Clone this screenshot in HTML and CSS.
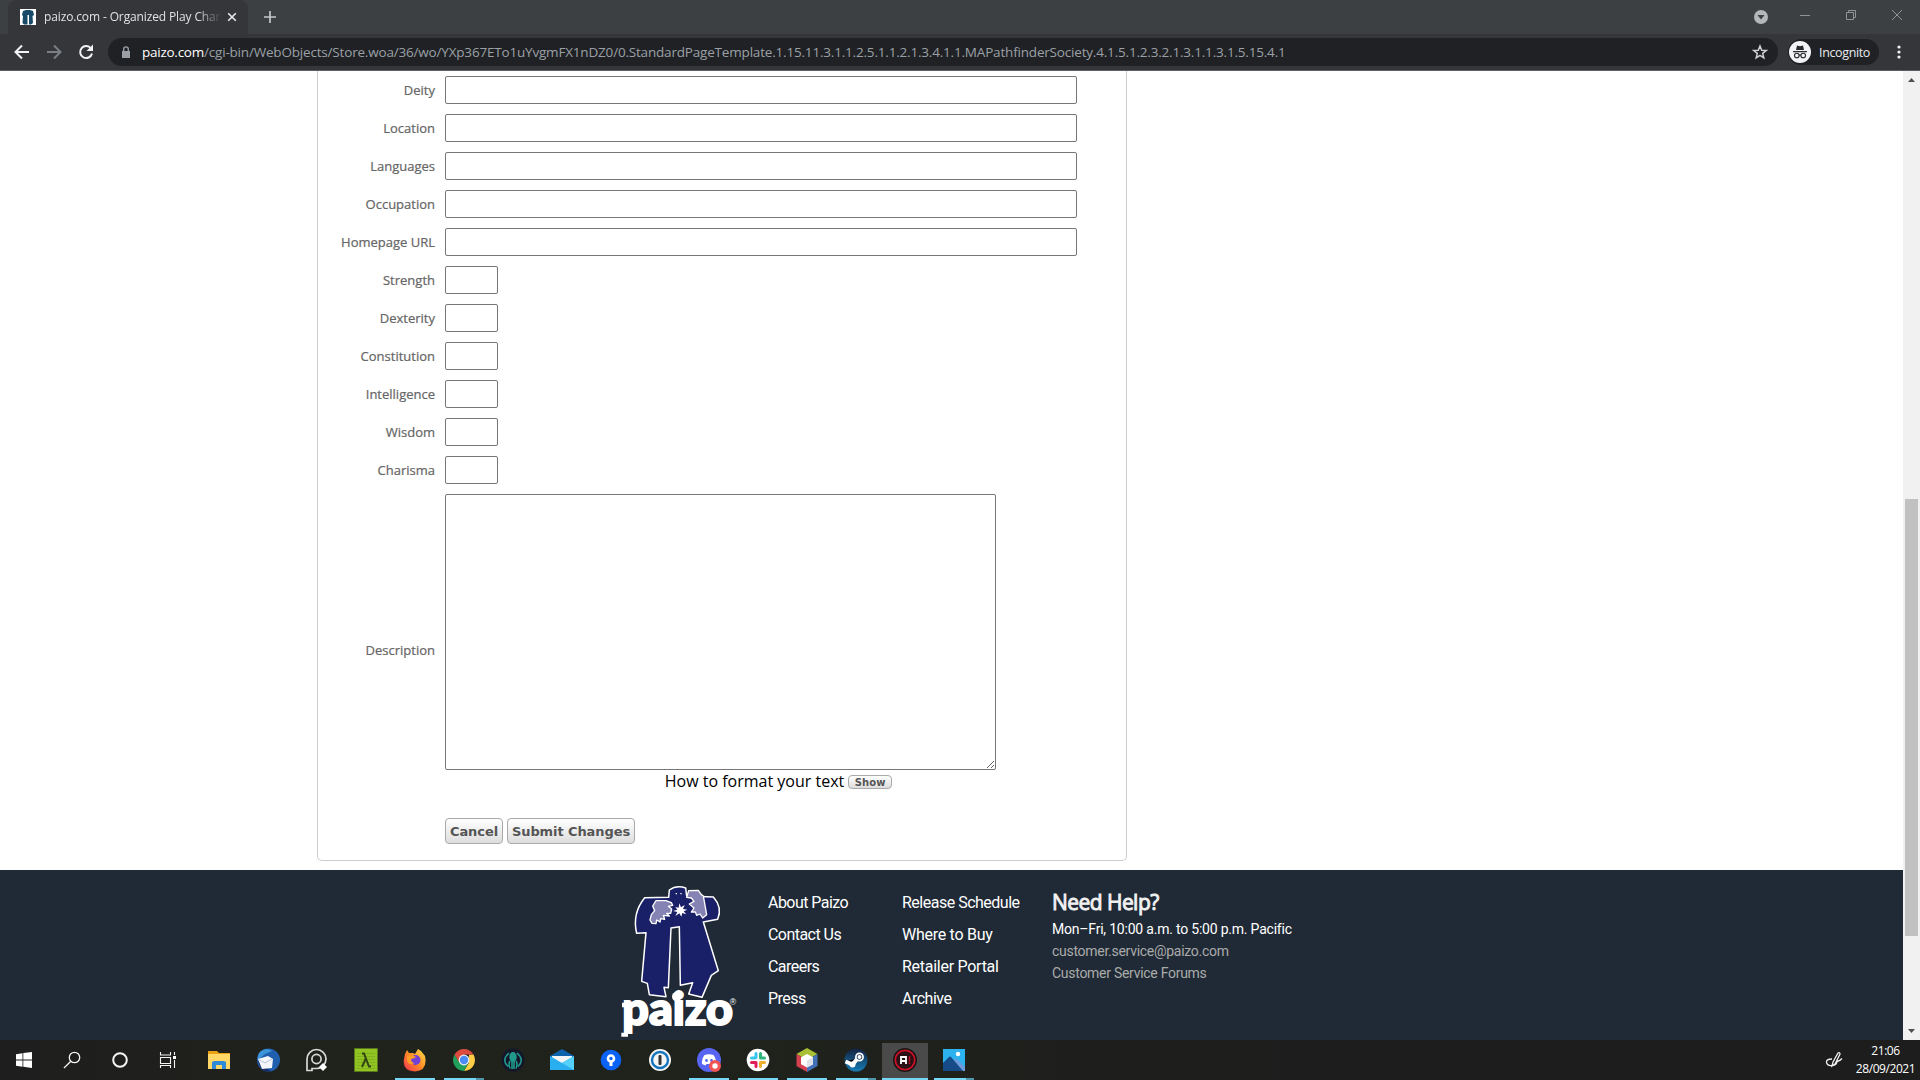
FILE: index.html
```
<!DOCTYPE html>
<html lang="en">
<head>
<meta charset="utf-8">
<title>paizo.com - Organized Play Characters</title>
<link rel="stylesheet" href="styles.css">
</head>
<body>
<div class="tabstrip">
  <div class="tab">
    <svg class="favicon" width="16" height="16" viewBox="0 0 16 16"><path fill="#fff" d="M0 0h16v16H0z"/><path fill="#164a68" d="M3 2l3-1h4l3 1 1 4-1.500 1 .5 7-2 1.500H9V6H7.500v9.500H4L2.500 14 3 7 2 6z"/></svg>
    <span class="tab-title">paizo.com - Organized Play Char</span>
    <svg class="tab-close" width="16" height="16" viewBox="0 0 16 16"><path stroke="#e8eaed" stroke-width="1.600" d="M4.200 4.200l7.600 7.600M11.800 4.200l-7.600 7.600"/></svg>
  </div>
  <svg class="newtab" width="16" height="16" viewBox="0 0 16 16"><path stroke="#c4c7ca" stroke-width="1.700" d="M8 2v12M2 8h12"/></svg>
  <div class="window-controls">
    <svg width="14" height="14" viewBox="0 0 14 14"><circle cx="7" cy="7" r="7" fill="#b4b6b9"/><path fill="#3c4043" d="M3.500 5h7L7 9.500z"/></svg>
    <svg width="10" height="10" viewBox="0 0 10 10"><path stroke="#909395" d="M0 5.500h10"/></svg>
    <svg width="10" height="10" viewBox="0 0 10 10"><path fill="none" stroke="#909395" d="M.5 2.500h7v7h-7zM2.500 2.500v-2h7v7h-2"/></svg>
    <svg width="10" height="10" viewBox="0 0 10 10"><path stroke="#909395" d="M0 0l10 10M10 0L0 10"/></svg>
  </div>
</div>
<div class="toolbar">
  <svg class="nav" width="16" height="16" viewBox="0 0 16 16"><path fill="none" stroke="#f1f3f4" stroke-width="2" d="M15 8H2M8 1.500L1.500 8 8 14.500"/></svg>
  <svg class="nav" width="16" height="16" viewBox="0 0 16 16"><path fill="none" stroke="#7c7f83" stroke-width="2" d="M1 8h13M8 1.500L14.500 8 8 14.500"/></svg>
  <svg class="nav" width="16" height="16" viewBox="0 0 16 16"><path fill="none" stroke="#f1f3f4" stroke-width="2" d="M13 4.500A6 6 0 1 0 14 9.500"/><path fill="#f1f3f4" d="M15 .5v6.500H8.500z"/></svg>
  <div class="omnibox">
    <svg width="10" height="13" viewBox="0 0 10 13"><path fill="#9aa0a6" d="M1 5h8v7H1z"/><path fill="none" stroke="#9aa0a6" stroke-width="1.400" d="M2.700 5V3.200a2.300 2.300 0 0 1 4.600 0V5"/></svg>
    <span class="url"><b>paizo.com</b><span>/cgi-bin/WebObjects/Store.woa/36/wo/YXp367ETo1uYvgmFX1nDZ0/0.StandardPageTemplate.1.15.11.3.1.1.2.5.1.1.2.1.3.4.1.1.MAPathfinderSociety.4.1.5.1.2.3.2.1.3.1.1.3.1.5.15.4.1</span></span>
    <svg class="star" width="16" height="16" viewBox="0 0 16 16"><path fill="none" stroke="#d0d2d5" stroke-width="1.500" d="M8 2l1.700 4.200 4.500.3-3.500 2.900 1.100 4.400L8 11.400l-3.800 2.400 1.100-4.400L1.800 6.500l4.500-.3z"/></svg>
  </div>
  <div class="incognito">
    <svg width="22" height="22" viewBox="0 0 22 22"><circle cx="11" cy="11" r="11" fill="#f1f3f4"/><path fill="#27292c" d="M8 4.500l3 .7 3-.7L15 9H7zM4 10h14v1.200H4z"/><g fill="none" stroke="#27292c" stroke-width="1.100"><circle cx="7.800" cy="14.500" r="2.300"/><circle cx="14.200" cy="14.500" r="2.300"/><path d="M10 14.200q1-.7 2 0"/></g></svg>
    <span>Incognito</span>
  </div>
  <svg class="kebab" width="4" height="14" viewBox="0 0 4 14"><g fill="#f1f3f4"><circle cx="2" cy="2" r="1.600"/><circle cx="2" cy="7" r="1.600"/><circle cx="2" cy="12" r="1.600"/></g></svg>
</div>
<div class="viewport">
  <main class="page">
    <form class="panel">
      <div class="row"><label>Deity</label><input class="wide"></div>
      <div class="row"><label>Location</label><input class="wide"></div>
      <div class="row"><label>Languages</label><input class="wide"></div>
      <div class="row"><label>Occupation</label><input class="wide"></div>
      <div class="row"><label>Homepage URL</label><input class="wide"></div>
      <div class="row"><label>Strength</label><input class="score"></div>
      <div class="row"><label>Dexterity</label><input class="score"></div>
      <div class="row"><label>Constitution</label><input class="score"></div>
      <div class="row"><label>Intelligence</label><input class="score"></div>
      <div class="row"><label>Wisdom</label><input class="score"></div>
      <div class="row"><label>Charisma</label><input class="score"></div>
      <div class="row desc"><label>Description</label>
        <div class="desc-field">
          <textarea></textarea>
          <div class="format"><span>How to format your text</span><button type="button" class="btn mini">Show</button></div>
        </div>
      </div>
      <div class="actions"><button type="button" class="btn cancel">Cancel</button><button type="button" class="btn submit">Submit Changes</button></div>
    </form>
    <footer class="footer">
      <svg class="logo" width="120" height="170" viewBox="0 0 360 510">
        <g stroke="#fff" stroke-width="4.500" stroke-linejoin="round">
          <path fill="#1a2068" d="M74 83L146 82L148 60Q170 44 197 54L200 78L280 81Q308 112 293 148L250 156L295 302L274 316L246 382L206 372L218 338L181 346L178 170L153 174L145 353L132 352L138 380L88 374L82 340L65 334L78 188L50 190Q36 130 74 83Z"/>
          <path fill="#8583b3" stroke-width="4" d="M108 92L138 92L154 98L158 106L145 109L155 117L152 130L140 130L148 138L130 136L134 148L122 146L120 156L110 150L108 161L96 160L90 150L94 134L104 122L98 108Z"/>
          <path fill="#8583b3" stroke-width="4" d="M206 62L235 61L244 74L250 78L260 134L248 144L240 132L230 136L226 126L214 126L222 114L208 102L222 94L214 84L200 82Z"/>
        </g>
        <path fill="#fff" d="M178 100l5 12 11-7-5 12 13 2-11 5 8 9-12-4-3 11-6-10-12 8 6-12-13-3 13-4-6-8 10 2zM167 69h4v4h-4zM181 69h4v4h-4z"/>
        <text class="logo-word" x="7" y="465" textLength="332" lengthAdjust="spacingAndGlyphs">paizo</text>
        <circle cx="170" cy="380" r="14" fill="#fff"/>
        <path fill="#fff" d="M6 398h20v14H6zM4 488h20v12H4z"/>
        <text class="logo-reg" x="329" y="406">®</text>
      </svg>
      <nav class="links one"><a>About Paizo</a><a>Contact Us</a><a>Careers</a><a>Press</a></nav>
      <nav class="links two"><a>Release Schedule</a><a class="loose">Where to Buy</a><a class="loose">Retailer Portal</a><a>Archive</a></nav>
      <section class="help"><h2>Need Help?</h2><p class="hours">Mon–Fri, 10:00 a.m. to 5:00 p.m. Pacific</p><p>customer.service@paizo.com</p><p>Customer Service Forums</p></section>
    </footer>
  </main>
  <div class="scrollbar">
    <svg width="17" height="17" viewBox="0 0 17 17"><path fill="#505050" d="M5 11h7L8.500 7z"/></svg>
    <div class="track"><div class="thumb"></div></div>
    <svg width="17" height="17" viewBox="0 0 17 17"><path fill="#505050" d="M5 6h7l-3.500 4z"/></svg>
  </div>
</div>
<div class="taskbar">
  <div class="sys"><svg width="24" height="24" viewBox="0 0 24 24"><path fill="#fff" d="M4 6.200l6.500-1v6.300H4zM11.300 5.100L20 4v7.500h-8.700zM4 12.400h6.500v6.400l-6.500-1zM11.300 12.400H20V20l-8.700-1.200z"/></svg></div>
  <div class="sys"><svg width="24" height="24" viewBox="0 0 24 24"><g fill="none" stroke="#f4f4f4" stroke-width="1.300"><circle cx="14.500" cy="9.500" r="5.200"/><path d="M10.800 13.200L4 20"/></g></svg></div>
  <div class="sys"><svg width="24" height="24" viewBox="0 0 24 24"><circle cx="12" cy="12" r="6.800" fill="none" stroke="#f4f4f4" stroke-width="2"/></svg></div>
  <div class="sys"><svg width="24" height="24" viewBox="0 0 24 24"><path fill="none" stroke="#f4f4f4" stroke-width="1.100" d="M4.500 4v3h10V4M4.500 9.500h10v6h-10zM4.500 20v-2.500h10V20M18.500 4v3M18.500 12v8"/><path fill="#fff" d="M17 8h3v3h-3z"/></svg></div>
  <div class="app first"><svg width="24" height="24" viewBox="0 0 24 24"><path fill="#e8a213" d="M1 3h9l2 2h11v4H1z"/><path fill="#ffd766" d="M1 6h22v15H1z"/><path fill="#2f8bd8" d="M5 21v-7l2-1h10l2 1v7h-4v-4H9v4z"/></svg></div>
  <div class="app"><svg width="24" height="24" viewBox="0 0 24 24"><circle cx="12.500" cy="12" r="11.500" fill="#1f5fae"/><path fill="#3d94d8" d="M5 3Q11-1 16 3L9 6 2 12Q1 6 5 3z"/><path fill="#1b2d66" d="M1 12l5 10q5 3 9 1l-6-4z"/><path fill="#f4f6fa" d="M2 11L12 8l5 3-1 9-10 1z"/><path fill="none" stroke="#b9c4d8" d="M2 11l7 4 7-4"/></svg></div>
  <div class="app"><svg width="24" height="24" viewBox="0 0 24 24"><g fill="none" stroke="#d8d8d8" stroke-width="1.700"><path d="M2 22.500V11a9.500 9.500 0 1 1 9.500 9.500H7v2z"/><circle cx="11.500" cy="11" r="4.600"/></g><path fill="#fff" d="M18 15l4 4-4 4-4-4z"/></svg></div>
  <div class="app"><svg width="24" height="24" viewBox="0 0 24 24"><path fill="#91c422" stroke="#58761b" d="M.5.500h23v23H.5z"/><path stroke="#7fb01d" d="M3 5.500h18M3 8.500h18M3 11.500h18M3 14.500h18M3 17.500h18M3 20.500h18"/><path fill="none" stroke="#334515" stroke-width="2" d="M8 5.500h2l5 13h2M12 10L8 19"/></svg></div>
  <div class="app open"><svg width="24" height="24" viewBox="0 0 24 24"><defs><linearGradient id="fx" x1="1" y1="0" x2="0" y2="1"><stop offset="0" stop-color="#ffe34a"/><stop offset=".5" stop-color="#ff8a24"/><stop offset="1" stop-color="#f22c56"/></linearGradient></defs><path fill="url(#fx)" d="M2 6l2-4 2 3h4l2 1 3-5 3 2 4 5q3 15-10 15.500Q-1 23 1 11z"/><circle cx="12.500" cy="12" r="5" fill="#7340d4"/><path fill="#ff9b28" d="M4 8q6-2 9 1-3 2-5 2 0 4 4 4-6 3-8-2z"/></svg></div>
  <div class="app open multi"><svg width="24" height="24" viewBox="0 0 24 24"><path fill="#20a05a" d="M2.500 6.500L7.500 14.500 12 17v6A11 11 0 0 1 2.500 6.500z"/><path fill="#ffcd45" d="M21.500 6.500A11 11 0 0 1 12 23l5-8.500V6.500z"/><path fill="#20a05a" d="M7 14l5 9 5-9z"/><path fill="#dd4b3e" d="M2.500 6.500a11 11 0 0 1 19 0H12L7 14z"/><circle cx="12" cy="12" r="5.400" fill="#f1f1f1"/><circle cx="12" cy="12" r="4.200" fill="#4a8bf4"/></svg></div>
  <div class="app"><svg width="24" height="24" viewBox="0 0 24 24"><circle cx="12" cy="12" r="11.500" fill="#14162a"/><ellipse cx="12" cy="9" rx="3.700" ry="5" fill="#20998c"/><g fill="none" stroke="#20998c" stroke-width="1.600"><path d="M11 12v9M13 12v9M9 13Q7 16 9 20.500M15 13q2 3 0 7.500M8 5Q0 12 7 18.500M16 5q8 7 1 13.500"/></g></svg></div>
  <div class="app"><svg width="24" height="24" viewBox="0 0 24 24"><path fill="#0f63ac" d="M0 8l12-7 12 7v6H0z"/><path fill="#f5f5f5" d="M2 8h20v3l-10 6L2 11z"/><path fill="#29aef0" d="M0 8l12 7 12-7v14H0z"/><path fill="#54d0fa" d="M24 8v14L12 15z"/></svg></div>
  <div class="app"><svg width="24" height="24" viewBox="0 0 24 24"><circle cx="12" cy="12" r="10.300" fill="#0b63f6"/><circle cx="12" cy="10.500" r="3" fill="none" stroke="#fff" stroke-width="2.600"/><path fill="#fff" d="M10.500 14h3v4h-3z"/></svg></div>
  <div class="app"><svg width="24" height="24" viewBox="0 0 24 24"><circle cx="12" cy="12" r="11" fill="#f5f5f5"/><circle cx="12" cy="12" r="8" fill="#f5f5f5" stroke="#1674bd" stroke-width="2.400"/><rect x="10.500" y="7" width="3" height="10" rx="1" fill="#333"/></svg></div>
  <div class="app open"><svg width="24" height="24" viewBox="0 0 24 24"><circle cx="12" cy="12" r="12" fill="#5865f2"/><path fill="#fff" d="M7.500 7q4.500-1.500 9 0 3 4 2.500 9l-3.500 1.500-1-1.500h-5l-1 1.500L5 16q-.5-5 2.500-9z"/><circle cx="9.500" cy="12.500" r="1.400" fill="#5865f2"/><circle cx="14.500" cy="12.500" r="1.400" fill="#5865f2"/><circle cx="18" cy="18" r="6" fill="#f05454"/><circle cx="18" cy="18" r="2.700" fill="#fff"/></svg></div>
  <div class="app open"><svg width="24" height="24" viewBox="0 0 24 24"><circle cx="12" cy="12" r="11.300" fill="#fff"/><g stroke-width="3" stroke-linecap="round"><path stroke="#36c5f0" d="M10 5.500v4M5.500 10H9"/><path stroke="#2eb67d" d="M14.500 5.500V10M14.500 10h4"/><path stroke="#ecb22e" d="M14.500 14.500h4M14.500 14.500v4"/><path stroke="#e01e5a" d="M5.500 14.500H10M10 14.500v4"/></g></svg></div>
  <div class="app open"><svg width="24" height="24" viewBox="0 0 24 24"><path fill="#a9bf35" d="M12 0l10.500 6L12 12 1.500 6z"/><path fill="#d3414f" d="M1.500 6L12 12v12L1.500 18z"/><path fill="#4472b8" d="M22.500 6L12 12v12l10.500-6z"/><path fill="#fff" d="M12 6l6 3.300v7L12 19.500l-6-3.200v-7z"/><path fill="#dfe3e6" d="M12 12.500l6-3.200v7L12 19.500z"/></svg></div>
  <div class="app open multi"><svg width="24" height="24" viewBox="0 0 24 24"><defs><linearGradient id="st" x1="0" y1="0" x2="0" y2="1"><stop offset="0" stop-color="#14203f"/><stop offset="1" stop-color="#167db5"/></linearGradient></defs><circle cx="12" cy="12" r="11.500" fill="url(#st)"/><path stroke="#fff" stroke-width="4" d="M1.500 13.500l7 3L14 10"/><circle cx="8.500" cy="16.500" r="3" fill="#fff"/><circle cx="15.500" cy="9" r="3.600" fill="#1a365b" stroke="#fff" stroke-width="1.700"/><circle cx="15.500" cy="9" r="2" fill="#fff"/></svg></div>
  <div class="app open active"><svg width="24" height="24" viewBox="0 0 24 24"><circle cx="12" cy="12" r="12" fill="#1b1515"/><circle cx="12" cy="12" r="9.700" fill="#2b1015" stroke="#cc1027" stroke-width="1.700"/><path fill="none" stroke="#fff" stroke-width="1.800" d="M8 16V9h5v7M8 13h5"/><path stroke="#c01328" stroke-width="1.500" d="M16.500 8v5.500M16.500 14.500V16"/></svg></div>
  <div class="app open multi"><svg width="24" height="24" viewBox="0 0 24 24"><path fill="#2bb2ef" d="M1 1h22v22H1z"/><path fill="#6b9bdc" d="M9 15l4-4q1-1 2 0l8 8v4H9z"/><path fill="#174b87" d="M1 15l6-6q1-1 2 0l12 14H1z"/><circle cx="16" cy="6" r="2.200" fill="#fff"/></svg></div>
  <div class="tray">
    <svg width="18" height="18" viewBox="0 0 18 18"><g fill="none" stroke="#f0f0f0" stroke-width="1.300"><path d="M7 15l1-4 5-9q2-1 2 1l-5 10zM7 8Q1 8 1.500 11.500 2.500 15 7 14.500q5-.5 5-4 3-.5 5-3"/></g></svg>
    <div class="clock"><span>21:06</span><span>28/09/2021</span></div>
  </div>
</div>
</body>
</html>
```
FILE: styles.css
```
* { box-sizing: border-box; }
body { margin: 0; width: 1920px; height: 1080px; overflow: hidden; display: flex; flex-direction: column; background: #fff; font-family: "Open Sans", sans-serif; }
svg { display: block; flex: none; }
span, b, p, a, h2, button { white-space: nowrap; }

.tabstrip { height: 34px; flex: none; background: #3c4043; display: flex; align-items: center; padding-left: 8px; }
.tab { width: 240px; height: 34px; background: #35363a; border-radius: 8px 8px 0 0; display: flex; align-items: center; padding: 0 8px 0 12px; }
.tab-title { width: 178px; margin-left: 8px; overflow: hidden; font-size: 12px; line-height: 16px; letter-spacing: -.13px; color: #dfe1e5; -webkit-mask-image: linear-gradient(90deg, #000 86%, transparent); mask-image: linear-gradient(90deg, #000 86%, transparent); }
.tab-close { margin-left: 2px; }
.newtab { margin-left: 14px; }
.window-controls { margin-left: auto; display: flex; align-items: center; gap: 36px; padding: 0 18px 5px 0; }
.window-controls svg:first-child { margin-top: 5px; margin-right: -4px; }

.toolbar { height: 37px; flex: none; background: #35363a; border-bottom: 1px solid #5f5b63; display: flex; align-items: center; padding: 0 19px 0 14px; }
.nav { margin-right: 16px; }
.omnibox { width: 1670px; height: 28px; margin-left: -2px; border-radius: 14px; background: #202124; display: flex; align-items: center; padding: 0 10px 0 13px; }
.url { margin-left: 11px; font-size: 13.500px; line-height: 20px; letter-spacing: -.187px; color: #9aa0a6; }
.url b { font-weight: 400; letter-spacing: -.252px; color: #fff; }
.star { margin-left: auto; }
.incognito { margin-left: 10px; width: 91px; height: 26px; border-radius: 13px; background: #202124; display: flex; align-items: center; gap: 8px; padding-left: 1px; color: #e8eaed; font-size: 12.500px; letter-spacing: -.36px; }
.kebab { margin-left: auto; }

.viewport { height: 969px; flex: none; display: flex; }
.page { width: 1903px; display: flex; flex-direction: column; }
.panel { margin-left: 317px; width: 810px; height: 790px; border: 1px solid #ccc; border-top: 0; border-radius: 0 0 5px 5px; padding-top: 5px; }
.row { height: 38px; display: flex; align-items: flex-start; }
.row label { width: 117px; margin-right: 10px; height: 28px; line-height: 28px; text-align: right; font-size: 13px; color: #666; -webkit-text-stroke: .22px #666; }
.row input, textarea { margin: 0; padding: 0; border: 1px solid #767676; border-radius: 2px; background: #fff; }
.wide { width: 632px; height: 28px; }
.score { width: 53px; height: 28px; }
.row.desc { height: 314px; }
.desc label { height: 314px; line-height: 312px; }
.desc-field { width: 667px; }
textarea { display: block; width: 551px; height: 276px; }
.format { display: flex; justify-content: center; align-items: center; gap: 4px; height: 22px; font-size: 16px; color: #000; }
.btn { height: 26px; border: 1px solid #aaa; border-radius: 4px; background: linear-gradient(#fff, #ddd); font: bold 13px "DejaVu Sans", sans-serif; letter-spacing: -.09px; color: #555; padding: 0; display: flex; align-items: center; justify-content: center; }
.cancel { width: 58px; }
.submit { width: 128px; }
.mini { height: 14px; width: 44px; font-size: 10px; letter-spacing: .14px; margin-top: 2px; }
.actions { display: flex; gap: 4px; margin: 10px 0 0 127px; }

.footer { margin-top: 9px; height: 170px; background: #202a36; color: #fff; font-family: Roboto, "Open Sans", sans-serif; display: flex; }
.logo { margin-left: 620px; }
.logo-word { font: 900 136px Lato, sans-serif; fill: #fff; stroke: #fff; stroke-width: 6px; }
.logo-reg { font: 26px "Liberation Sans", sans-serif; fill: #fff; }
.links { display: flex; flex-direction: column; padding-top: 17px; line-height: 32px; font-size: 16px; letter-spacing: -.54px; }
.one { width: 134px; margin-left: 28px; }
.two { width: 150px; letter-spacing: -.5px; }
.loose { letter-spacing: -.27px; }
.help { font-size: 14px; line-height: 22px; letter-spacing: -.28px; color: #aaa; }
.help h2 { margin: 18px 0 2px; font: 400 21px/28px "Open Sans", sans-serif; letter-spacing: -.55px; color: #f1f1f1; -webkit-text-stroke: .9px #f1f1f1; }
.help p { margin: 0; }
.help .hours { color: #fff; letter-spacing: -.21px; }

.scrollbar { width: 17px; background: #f1f1f1; display: flex; flex-direction: column; }
.track { flex: 1; padding: 411px 2px 0; }
.thumb { height: 437px; background: #c1c1c1; }

.taskbar { height: 40px; flex: none; background: linear-gradient(90deg, #1e1e1e, #20231b 22%, #1f211c 45%, #1d1d1d 70%); display: flex; }
.sys { width: 48px; display: grid; place-items: center; }
.app { width: 40px; margin-right: 9px; display: grid; place-items: center; border-bottom: 2px solid transparent; padding-top: 2px; }
.first { margin-left: 7px; }
.open { border-bottom-color: #76d7f7; }
.multi { border-image: linear-gradient(90deg, #76d7f7 78%, #5197ac 78%) 1; border-width: 0 0 2px; border-style: solid; }
.active { width: 46px; margin: 3px 6px 0 -3px; padding-top: 0; background: #4a4a4a; padding-bottom: 1px; }
.tray { margin-left: auto; display: flex; align-items: center; gap: 13px; padding-right: 5px; color: #fff; font-size: 12px; }
.clock { width: 59px; display: flex; flex-direction: column; align-items: center; line-height: 18px; letter-spacing: -.43px; }
```
